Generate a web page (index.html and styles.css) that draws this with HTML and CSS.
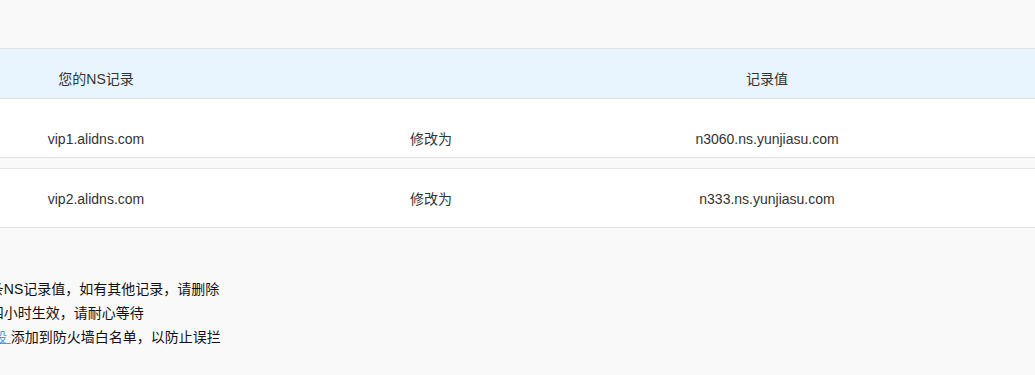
FILE: index.html
```html
<!DOCTYPE html>
<html lang="zh-CN">
<head>
<meta charset="utf-8">
<title>NS记录</title>
<link rel="stylesheet" href="styles.css">
</head>
<body>
<div class="page">
  <div class="ns-table">
    <div class="ns-head">
      <div class="cell">您的NS记录</div>
      <div class="cell"></div>
      <div class="cell">记录值</div>
      <div class="cell"></div>
    </div>
    <div class="ns-row ns-row--first">
      <div class="cell">vip1.alidns.com</div>
      <div class="cell">修改为</div>
      <div class="cell">n3060.ns.yunjiasu.com</div>
      <div class="cell"></div>
    </div>
    <div class="ns-row">
      <div class="cell">vip2.alidns.com</div>
      <div class="cell">修改为</div>
      <div class="cell">n333.ns.yunjiasu.com</div>
      <div class="cell"></div>
    </div>
  </div>
  <div class="notes">
    <p class="note">1、只保留以上两条NS记录值，如有其他记录，请删除</p>
    <p class="note">2、修改后需二十四小时生效，请耐心等待</p>
    <p class="note">3、请将 <a class="link" href="#">云加速IP段 </a>添加到防火墙白名单，以防止误拦</p>
  </div>
</div>
</body>
</html>
```
FILE: styles.css
```css
html, body {
  margin: 0;
  padding: 0;
}
body {
  background: #f9f9f9;
  font-family: "Liberation Sans", "Noto Sans CJK SC", sans-serif;
  font-size: 14px;
  color: #333;
  overflow: hidden;
}
.page {
  padding-top: 48px;
}
.ns-table {
  border-top: 1px solid #e3e3e3;
}
.ns-head,
.ns-row {
  display: grid;
  grid-template-columns: 192px 478px 194px 1fr;
  line-height: 20px;
}
.cell {
  text-align: center;
  white-space: nowrap;
}
.ns-head {
  background: #e8f5fe;
  padding: 20px 0 9px;
  border-bottom: 1px solid #e3e3e3;
}
.ns-row {
  background: #fff;
  padding: 20px 0 18px;
  border-top: 1px solid #e3e3e3;
  border-bottom: 1px solid #e3e3e3;
  margin-top: 10px;
}
.ns-row--first {
  padding: 30px 0 8px;
  border-top: 0;
  margin-top: 0;
}
.notes {
  margin: 49px 0 0 -116px;
  color: #111;
}
.note {
  margin: 0;
  line-height: 24px;
  white-space: nowrap;
}
.link {
  color: #3d9ff0;
  text-decoration: underline;
}
```
